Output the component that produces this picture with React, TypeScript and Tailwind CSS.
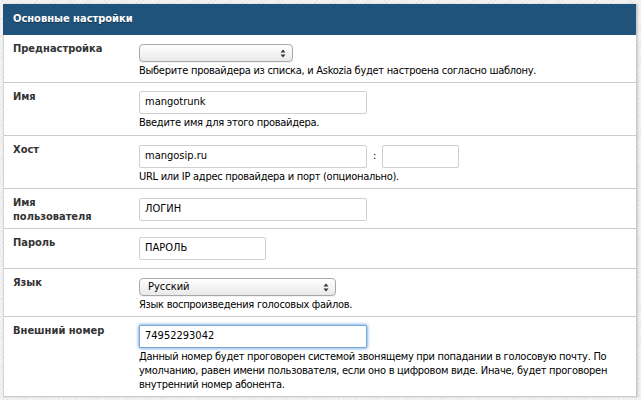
import React from "react";

const font = { fontFamily: '"DejaVu Sans Condensed", "DejaVu Sans", Verdana, sans-serif' };

function Arrows() {
  return (
    <svg width="6" height="9" viewBox="0 0 6 9" className="shrink-0">
      <path d="M3 0.5 L5.5 3.5 L0.5 3.5 Z" fill="#333" />
      <path d="M3 8.5 L5.5 5.5 L0.5 5.5 Z" fill="#333" />
    </svg>
  );
}

function FakeSelect({ width, value }: { width: string; value?: string }) {
  return (
    <div
      className={`${width} h-[18px] flex items-center justify-between rounded-[4px] border border-[#a8a8a8] bg-gradient-to-b from-white to-[#e9e9e9] pl-[8px] pr-[6px] text-[11px] text-black shadow-[0_1px_0_rgba(0,0,0,0.05)]`}
    >
      <span>{value}</span>
      <Arrows />
    </div>
  );
}

function TextInput({ width, value, focused }: { width: string; value?: string; focused?: boolean }) {
  return (
    <div
      className={`${width} h-[23px] flex items-center rounded-[2px] border bg-white pl-[5px] text-[11px] text-black ${
        focused ? "border-[#7aa7d9] shadow-[0_0_3px_1px_#8cb6e6]" : "border-[#cfcfcf]"
      }`}
    >
      {value}
    </div>
  );
}

function Row({ label, height, children }: { label: React.ReactNode; height: string; children: React.ReactNode }) {
  return (
    <div className={`grid grid-cols-[135px_1fr] border-b border-[#cccccc] ${height}`}>
      <div className="pl-[9px] pt-[7px] text-[11px] font-bold leading-[14px] text-[#333]">{label}</div>
      <div className="pt-[8px] pr-[20px]">{children}</div>
    </div>
  );
}

function Hint({ children }: { children: React.ReactNode }) {
  return <div className="mt-[2px] text-[11px] leading-[14px] tracking-[-0.28px] text-black">{children}</div>;
}

export default function App() {
  return (
    <div
      style={font}
      className="h-[400px] w-[641px] overflow-hidden bg-[repeating-linear-gradient(135deg,#f4f4f4_0px,#f4f4f4_2px,#e9e9e9_2px,#e9e9e9_3px)] pl-[3px] pt-[4px]"
    >
      <div className="w-[634px] border-r border-[#c8c8c8] bg-white shadow-[1px_0_2px_rgba(0,0,0,0.15)]">
        <div className="flex h-[31px] items-center bg-[#1f537b] pl-[10px] text-[11px] font-bold text-white [text-shadow:0_1px_0_rgba(0,0,0,0.4)]">
          Основные настройки
        </div>
        <div className="border-l border-[#d4d4d4]">
          <Row label="Преднастройка" height="h-[48px]">
            <div className="pt-[1px]">
              <FakeSelect width="w-[154px]" />
            </div>
            <Hint>Выберите провайдера из списка, и Askozia будет настроена согласно шаблону.</Hint>
          </Row>
          <Row label="Имя" height="h-[53px]">
            <TextInput width="w-[228px]" value="mangotrunk" />
            <Hint>Введите имя для этого провайдера.</Hint>
          </Row>
          <Row label="Хост" height="h-[53px]">
            <div className="pt-[1px] flex items-center">
              <TextInput width="w-[228px]" value="mangosip.ru" />
              <span className="mx-[6px] text-[11px]">:</span>
              <TextInput width="w-[77px]" />
            </div>
            <Hint>URL или IP адрес провайдера и порт (опционально).</Hint>
          </Row>
          <Row
            label={
              <>
                Имя
                <br />
                пользователя
              </>
            }
            height="h-[40px]"
          >
            <div className="pt-[1px]">
              <TextInput width="w-[228px]" value="ЛОГИН" />
            </div>
          </Row>
          <Row label="Пароль" height="h-[40px]">
            <TextInput width="w-[127px]" value="ПАРОЛЬ" />
          </Row>
          <Row label="Язык" height="h-[48px]">
            <div className="pt-[1px]">
              <FakeSelect width="w-[197px]" value="Русский" />
            </div>
            <Hint>Язык воспроизведения голосовых файлов.</Hint>
          </Row>
          <Row label="Внешний номер" height="h-[80px]">
            <TextInput width="w-[228px]" value="74952293042" focused />
            <Hint>
              Данный номер будет проговорен системой звонящему при попадании в голосовую почту. По умолчанию, равен
              имени пользователя, если оно в цифровом виде. Иначе, будет проговорен внутренний номер абонента.
            </Hint>
          </Row>
        </div>
      </div>
    </div>
  );
}
